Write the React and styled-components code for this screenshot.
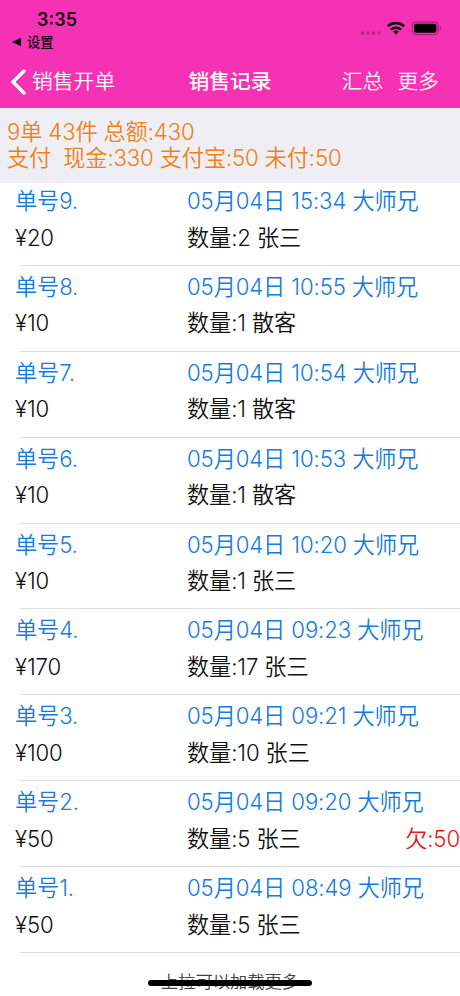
import React from "react";
import styled, { createGlobalStyle } from "styled-components";

const GlobalStyle = createGlobalStyle`
  * {
    box-sizing: border-box;
  }

  body {
    margin: 0;
    background: #fff;
    font-family: Inter, "Noto Sans CJK SC", sans-serif;
    font-weight: 360;
  }
`;

const Screen = styled.div`
  width: 460px;
  height: 996px;
  overflow: hidden;
  display: flex;
  flex-direction: column;
  background: #fff;
`;

const TopArea = styled.header`
  flex: none;
  height: 108px;
  background: #f532b4;
`;

const StatusBar = styled.div`
  height: 54px;
  display: flex;
  justify-content: space-between;
  padding: 0 17px 0 11px;
  color: #160611;
`;

const StatusLeft = styled.div`
  display: flex;
  flex-direction: column;
  padding-top: 9px;
`;

const Time = styled.div`
  padding-left: 26px;
  font-size: 18px;
  line-height: 22px;
  font-weight: 600;
`;

const BackToApp = styled.div`
  display: flex;
  align-items: center;
  gap: 5px;
  font-size: 13.3px;
  line-height: 22px;
  font-weight: 500;
`;

const StatusIcons = styled.div`
  height: 56px;
  display: flex;
  align-items: center;
`;

const NavBar = styled.nav`
  height: 54px;
  display: grid;
  grid-template-columns: 1fr auto 1fr;
  align-items: center;
  padding: 1px 21px 0 10px;
  color: #fff;
  font-size: 20.8px;
  line-height: 30px;
`;

const BackButton = styled.div`
  display: flex;
  align-items: center;
  gap: 5px;
`;

const NavTitle = styled.div`
  font-weight: 500;
  padding-left: 11px;
`;

const NavActions = styled.div`
  display: flex;
  justify-content: flex-end;
  gap: 14px;
`;

const Summary = styled.section`
  flex: none;
  height: 75px;
  padding: 11px 7px 0;
  background: #efeef4;
  color: #f08010;
  font-size: 22.2px;
  line-height: 26.3px;
  letter-spacing: -0.14px;
  white-space: pre;
`;

const List = styled.main`
  flex: none;
  margin-top: -3px;
`;

const Row = styled.div`
  height: 85.9px;
  display: grid;
  grid-template-columns: 172px 1fr auto;
  grid-template-rows: 36.6px 36.6px;
  padding: 3px 0 0 15px;
  color: #111;
  font-size: 22.2px;
  line-height: 36.6px;
  letter-spacing: -0.12px;
  white-space: nowrap;
  background: linear-gradient(#dcdcde, #dcdcde) 20px 100% / 100% 1px no-repeat;
`;

const Cell = styled.span`
  color: ${(props) => props.$color || "inherit"};
  grid-column: ${(props) => props.$span || "auto"};
`;

const Footer = styled.footer`
  position: relative;
  height: 43px;
  padding-top: 16px;
  text-align: center;
  font-size: 17.3px;
  line-height: 26px;
  color: #444;
`;

const HomeIndicator = styled.div`
  position: absolute;
  left: 148px;
  bottom: 10px;
  width: 164px;
  height: 6px;
  border-radius: 3px;
  background: #000;
`;

const orders = [
  { id: 9, time: "15:34", total: 20, count: 2, customer: "张三" },
  { id: 8, time: "10:55", total: 10, count: 1, customer: "散客" },
  { id: 7, time: "10:54", total: 10, count: 1, customer: "散客" },
  { id: 6, time: "10:53", total: 10, count: 1, customer: "散客" },
  { id: 5, time: "10:20", total: 10, count: 1, customer: "张三" },
  { id: 4, time: "09:23", total: 170, count: 17, customer: "张三" },
  { id: 3, time: "09:21", total: 100, count: 10, customer: "张三" },
  { id: 2, time: "09:20", total: 50, count: 5, customer: "张三", owed: 50 },
  { id: 1, time: "08:49", total: 50, count: 5, customer: "张三" },
];

const StatusGlyphs = () => (
  <svg width="84" height="18" viewBox="0 0 84 18">
    <g fill="#b7287f">
      <circle cx="3.5" cy="14" r="1.7" />
      <circle cx="9" cy="14" r="1.7" />
      <circle cx="14.5" cy="14" r="1.7" />
      <circle cx="20" cy="14" r="1.7" />
    </g>
    <g fill="none" stroke="#000" strokeWidth="2.5">
      <path d="M28.9 7.1a12 12 0 0 1 16.2 0" />
      <path d="M32 10.6a7.5 7.5 0 0 1 10 0" />
    </g>
    <path d="M34.2 12.6a4.3 4.3 0 0 1 5.6 0L37 15.5z" fill="#000" />
    <rect x="53.2" y="3" width="26" height="12.6" rx="3.6" fill="none" stroke="#981b70" />
    <rect x="55" y="4.8" width="22.4" height="9" rx="2" fill="#000" />
    <path d="M80.8 7.2c1.8.7 1.8 3.5 0 4.2z" fill="#981b70" />
  </svg>
);

const App = () => {
  return (
    <Screen>
      <GlobalStyle />
      <TopArea>
        <StatusBar>
          <StatusLeft>
            <Time>3:35</Time>
            <BackToApp>
              <svg width="11" height="10" viewBox="0 0 11 10">
                <path d="M1 5l9-4.2v8.4z" fill="currentColor" />
              </svg>
              设置
            </BackToApp>
          </StatusLeft>
          <StatusIcons>
            <StatusGlyphs />
          </StatusIcons>
        </StatusBar>
        <NavBar>
          <BackButton>
            <svg width="17" height="28" viewBox="0 0 17 28">
              <path
                d="M14 3L3 14l11 11"
                fill="none"
                stroke="currentColor"
                strokeWidth="3.5"
                strokeLinecap="round"
              />
            </svg>
            销售开单
          </BackButton>
          <NavTitle>销售记录</NavTitle>
          <NavActions>
            <span>汇总</span>
            <span>更多</span>
          </NavActions>
        </NavBar>
      </TopArea>

      <Summary>
        <div>9单 43件 总额:430</div>
        <div>{"支付  现金:330 支付宝:50 未付:50"}</div>
      </Summary>

      <List>
        {orders.map((order) => (
          <Row key={order.id}>
            <Cell $color="#157be0">单号{order.id}.</Cell>
            <Cell $color="#157be0" $span="2 / 4">
              05月04日 {order.time} 大师兄
            </Cell>
            <Cell>¥{order.total}</Cell>
            <Cell>
              数量:{order.count} {order.customer}
            </Cell>
            {order.owed && <Cell $color="#e41818">欠:{order.owed}</Cell>}
          </Row>
        ))}
      </List>

      <Footer>
        上拉可以加载更多
        <HomeIndicator />
      </Footer>
    </Screen>
  );
};

export default App;
